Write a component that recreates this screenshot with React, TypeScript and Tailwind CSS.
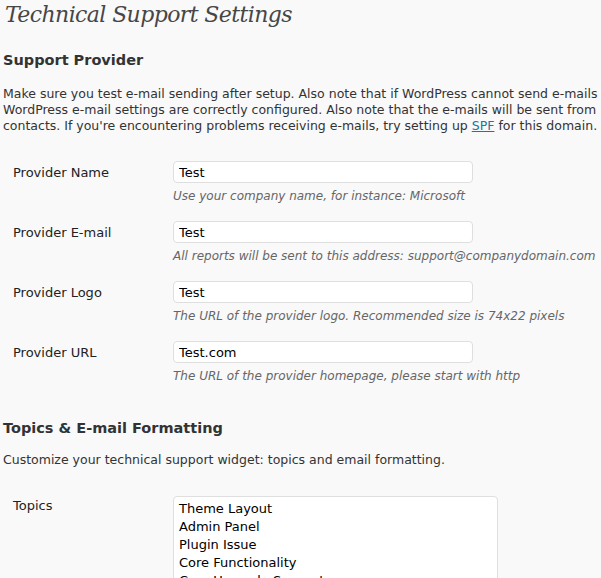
import { useState } from "react";

interface Field {
    label: string;
    value: string;
    hint: string;
}

const fields: Field[] = [
    { label: "Provider Name", value: "Test", hint: "Use your company name, for instance: Microsoft" },
    { label: "Provider E-mail", value: "Test", hint: "All reports will be sent to this address: support@companydomain.com" },
    { label: "Provider Logo", value: "Test", hint: "The URL of the provider logo. Recommended size is 74x22 pixels" },
    { label: "Provider URL", value: "Test.com", hint: "The URL of the provider homepage, please start with http" },
];

const topics = ["Theme Layout", "Admin Panel", "Plugin Issue", "Core Functionality", "Core Upgrade Support", "Other"];

function FieldRow({ field }: { field: Field }) {
    const [value, setValue] = useState(field.value);
    return (
        <div className="flex h-[60px]">
            <div className="w-[170px] shrink-0 pl-[10px] pt-[3px] text-[13px] text-[#222]">{field.label}</div>
            <div className="pt-[1px]">
                <input
                    value={value}
                    onChange={e => setValue(e.target.value)}
                    className="block w-[300px] h-[22px] bg-white border border-[#dfdfdf] rounded-[4px] px-[5px] text-[13px] text-black outline-none"
                />
                <div className="mt-[4px] text-[12px] italic text-[#666]">{field.hint}</div>
            </div>
        </div>
    );
}

export default function App() {
    return (
        <div className="h-screen bg-[#f9f9f9] overflow-hidden text-[#333]" style={{ fontFamily: '"DejaVu Sans", Verdana, sans-serif' }}>
            <div className="px-[3px]">
                <h1
                    className="pl-[2px] text-[22px] leading-[29px] italic text-[#464646] tracking-[-0.6px]"
                    style={{ fontFamily: '"DejaVu Serif", Georgia, serif' }}
                >
                    Technical Support Settings
                </h1>

                <h3 className="mt-[21px] text-[14.5px] font-bold text-[#333] leading-[20px]">Support Provider</h3>
                <p className="mt-[16px] text-[12.5px] leading-[16px] whitespace-nowrap">
                    Make sure you test e-mail sending after setup. Also note that if WordPress cannot send e-mails<br />
                    WordPress e-mail settings are correctly configured. Also note that the e-mails will be sent from<br />
                    contacts. If you're encountering problems receiving e-mails, try setting up{" "}
                    <a className="text-[#21759b] underline">SPF</a> for this domain.
                </p>

                <div className="mt-[26px]">
                    {fields.map(f => (
                        <FieldRow key={f.label} field={f} />
                    ))}
                </div>

                <h3 className="mt-[18px] text-[14.5px] font-bold text-[#333] leading-[20px]">Topics &amp; E-mail Formatting</h3>
                <p className="mt-[14px] text-[12.5px] leading-[16px]">Customize your technical support widget: topics and email formatting.</p>

                <div className="flex mt-[28px]">
                    <div className="w-[170px] shrink-0 pl-[10px] text-[13px] text-[#222]">Topics</div>
                    <textarea
                        readOnly
                        value={topics.join("\n")}
                        className="block w-[325px] h-[120px] bg-white border border-[#dfdfdf] rounded-[4px] px-[5px] pt-[3px] text-[13px] leading-[18px] text-black resize-none outline-none"
                    />
                </div>
            </div>
        </div>
    );
}
